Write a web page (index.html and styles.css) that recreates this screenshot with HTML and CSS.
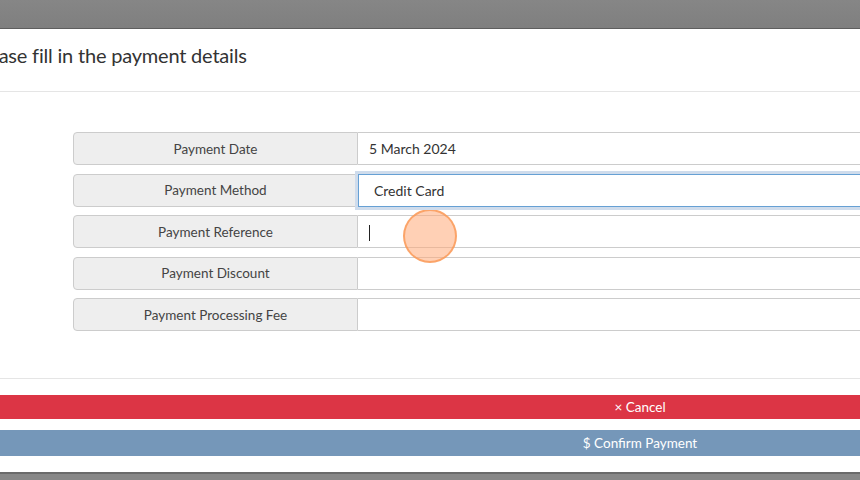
FILE: index.html
```html
<!DOCTYPE html>
<html lang="en">
<head>
  <meta charset="UTF-8">
  <meta name="viewport" content="width=device-width, initial-scale=1.0">
  <title>Payment details</title>
  <link rel="stylesheet" href="styles.css">
</head>
<body>
  <div class="backdrop-top"></div>
  <div class="modal">
    <div class="modal-header">
      <h4 class="modal-title">Please fill in the payment details</h4>
    </div>
    <div class="modal-body">
      <div class="input-group">
        <span class="addon">Payment Date</span>
        <div class="field">5 March 2024</div>
      </div>
      <div class="input-group">
        <span class="addon">Payment Method</span>
        <div class="field focused">Credit Card</div>
      </div>
      <div class="input-group">
        <span class="addon">Payment Reference</span>
        <div class="field"><span class="caret"></span></div>
      </div>
      <div class="input-group">
        <span class="addon">Payment Discount</span>
        <div class="field"></div>
      </div>
      <div class="input-group">
        <span class="addon">Payment Processing Fee</span>
        <div class="field"></div>
      </div>
    </div>
    <div class="modal-footer">
      <button class="btn btn-cancel">&times; Cancel</button>
      <button class="btn btn-confirm">$ Confirm Payment</button>
    </div>
  </div>
  <div class="click-dot"></div>
</body>
</html>
```

FILE: styles.css
```css
body {
  margin: 0;
  background-color: #878787;
  font-family: Lato, "Open Sans", sans-serif;
  overflow: hidden;
  height: 480px;
}

.backdrop-top {
  height: 28px;
  background: linear-gradient(#868686, #7f7f7f);
  border-bottom: 1px solid #5e5e5e;
}

.modal {
  margin-left: -40px;
  width: 1360px;
  background-color: #fff;
  border-bottom: 2px solid #6a6a6a;
}

.modal-header {
  height: 63px;
  box-sizing: border-box;
  padding: 14px 14px 0 12px;
  border-bottom: 1px solid #e5e5e5;
}

.modal-title {
  margin: 0;
  font-size: 20px;
  line-height: 24px;
  font-weight: normal;
  color: #333;
  letter-spacing: -0.2px;
}

.modal-body {
  padding: 40px 0 47px 113px;
}

.input-group {
  display: flex;
  height: 33px;
  margin-bottom: 8.5px;
}

.input-group:last-child {
  margin-bottom: 0;
}

.addon {
  width: 285px;
  flex-shrink: 0;
  box-sizing: border-box;
  background-color: #eeeeee;
  border: 1px solid #cccccc;
  border-radius: 4px 0 0 4px;
  display: flex;
  align-items: center;
  justify-content: center;
  font-size: 13.5px;
  color: #444;
}

.field {
  flex: 1;
  box-sizing: border-box;
  border: 1px solid #cccccc;
  border-left: none;
  display: flex;
  align-items: center;
  padding-left: 11px;
  font-size: 14px;
  color: #333;
}

.field.focused {
  border: 1px solid #66a0d4;
  box-shadow: 0 0 0 3px #cfdcec;
  padding-left: 15px;
  position: relative;
  z-index: 1;
}

.caret {
  display: inline-block;
  width: 1px;
  height: 16px;
  background-color: #222;
  margin-top: 3px;
}

.modal-footer {
  border-top: 1px solid #e5e5e5;
  padding: 16px 0 16px 0;
  display: flex;
  flex-direction: column;
  gap: 11px;
}

.btn {
  border: none;
  width: 100%;
  font-family: Lato, "Open Sans", sans-serif;
  font-size: 13.5px;
  color: #fff;
  padding: 0;
  cursor: pointer;
}

.btn-cancel {
  height: 24px;
  background-color: #dc3545;
}

.btn-confirm {
  height: 26px;
  background-color: #7597b9;
}

.click-dot {
  position: absolute;
  left: 403px;
  top: 209px;
  width: 50px;
  height: 50px;
  border-radius: 50%;
  background-color: rgba(255, 170, 120, 0.55);
  border: 2px solid rgba(250, 150, 80, 0.75);
}
```
